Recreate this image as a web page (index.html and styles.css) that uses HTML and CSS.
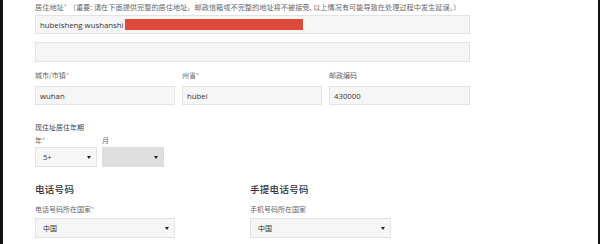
FILE: index.html
```html
<!DOCTYPE html>
<html lang="zh">
<head>
<meta charset="utf-8">
<link rel="stylesheet" href="styles.css">
</head>
<body>
<div class="page">
  <div class="edge edge-left"></div>
  <div class="content">
    <div class="label label-top">居住地址<span class="star">*</span> （重要: 请在下面提供完整的居住地址。邮政信箱或不完整的地址将不被接受, 以上情况有可能导致在处理过程中发生延误。）</div>
    <div class="input input-wide input-first">
      <span class="val">hubeisheng wushanshi</span>
      <span class="redact"></span>
    </div>
    <div class="input input-wide input-second"></div>

    <div class="row3">
      <div class="field">
        <div class="label">城市/市镇<span class="star">*</span></div>
        <div class="input"><span class="val">wuhan</span></div>
      </div>
      <div class="field">
        <div class="label">州省<span class="star">*</span></div>
        <div class="input"><span class="val">hubei</span></div>
      </div>
      <div class="field field-zip">
        <div class="label">邮政编码</div>
        <div class="input"><span class="val">430000</span></div>
      </div>
    </div>

    <div class="label label-period">现住址居住年期</div>
    <div class="period-labels">
      <div class="plabel">年<span class="star">*</span></div>
      <div class="plabel">月</div>
    </div>
    <div class="period-selects">
      <div class="select select-small"><span class="val">5+</span><span class="arrow"></span></div>
      <div class="select select-small select-disabled"><span class="val"></span><span class="arrow"></span></div>
    </div>

    <div class="phones">
      <div class="phone">
        <div class="heading">电话号码</div>
        <div class="label label-phone">电话号码所在国家<span class="star">*</span></div>
        <div class="select select-country"><span class="val">中国</span><span class="arrow"></span></div>
      </div>
      <div class="phone">
        <div class="heading">手提电话号码</div>
        <div class="label label-phone">手机号码所在国家</div>
        <div class="select select-country"><span class="val">中国</span><span class="arrow"></span></div>
      </div>
    </div>
  </div>
  <div class="edge edge-right"></div>
</div>
</body>
</html>
```
FILE: styles.css
```css
* { box-sizing: border-box; margin: 0; padding: 0; }
html, body { width: 600px; height: 244px; overflow: hidden; background: #fff; }
body { font-family: "Open Sans", "Noto Sans CJK SC", sans-serif; color: #555; }

.page { display: flex; height: 244px; }
.edge { background: #111; flex: none; }
.edge-left { width: 3px; }
.edge-right { width: 2px; }
.content { flex: 1; padding-left: 32px; }

.label {
  font-family: "Noto Sans CJK SC", sans-serif;
  font-size: 7px;
  line-height: 10px;
  height: 10px;
  color: #666;
  white-space: nowrap;
}
.star { color: #999; }
.label-top { margin-top: 2px; font-size: 7.2px; }

.input {
  position: relative;
  height: 19px;
  background: #f6f6f6;
  border: 1px solid #e2e2e2;
  display: flex;
  align-items: center;
  padding-left: 4px;
  font-size: 7.8px;
  color: #333;
}
.input-wide { width: 435px; }
.input-first { margin-top: 3px; }
.input-second { margin-top: 8px; height: 20px; }
.redact {
  position: absolute;
  left: 89px;
  top: 3px;
  width: 178px;
  height: 11px;
  background: #dc4a3c;
}

.row3 { display: flex; gap: 7px; margin-top: 8px; }
.field { width: 140px; }
.field-zip { width: 141px; }
.field .input { margin-top: 6px; }

.label-period { margin-top: 17px; color: #444; }
.period-labels { display: flex; gap: 5px; margin-top: 3px; }
.plabel {
  width: 62px;
  font-family: "Noto Sans CJK SC", sans-serif;
  font-size: 7px;
  line-height: 10px;
  height: 10px;
  color: #666;
}
.period-selects { display: flex; gap: 5px; margin-top: 2px; }

.select {
  position: relative;
  height: 20px;
  background: #f6f6f6;
  border: 1px solid #e2e2e2;
  display: flex;
  align-items: center;
  padding-left: 7px;
  font-family: "Open Sans", "Noto Sans CJK SC", sans-serif;
  font-size: 7.5px;
  color: #333;
}
.select-small { width: 62px; }
.select-disabled { background: #dedede; border-color: #dcdcdc; }
.select-country { width: 140px; margin-top: 4px; font-family: "Noto Sans CJK SC", sans-serif; font-size: 7px; }
.arrow {
  position: absolute;
  right: 5px;
  top: 8px;
  width: 0; height: 0;
  border-left: 2px solid transparent;
  border-right: 2px solid transparent;
  border-top: 3px solid #222;
}

.phones { display: flex; gap: 75px; }
.phone { width: 140px; }
.phone:last-child { width: 141px; }
.phone:last-child .select-country { width: 141px; }
.heading {
  font-family: "Noto Sans CJK SC", sans-serif;
  font-size: 9.5px;
  font-weight: 500;
  line-height: 12px;
  height: 12px;
  margin-top: 16px;
  color: #333;
  letter-spacing: 0.3px;
}
.label-phone { margin-top: 9px; }
```
